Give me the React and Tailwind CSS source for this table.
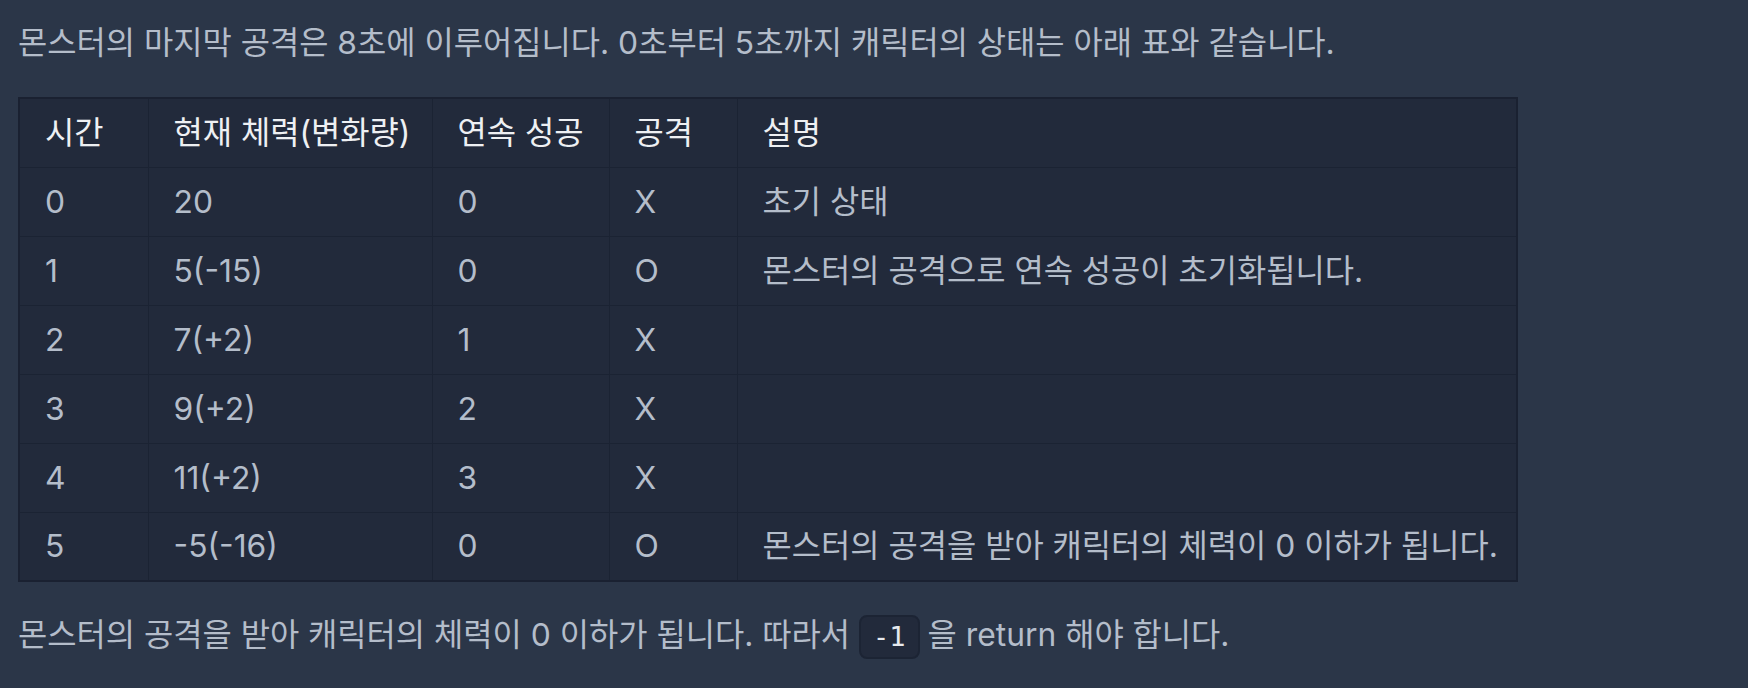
import React from 'react';

const rows = [
    ['0', '20', '0', 'X', '초기 상태'],
    ['1', '5(-15)', '0', 'O', '몬스터의 공격으로 연속 성공이 초기화됩니다.'],
    ['2', '7(+2)', '1', 'X', ''],
    ['3', '9(+2)', '2', 'X', ''],
    ['4', '11(+2)', '3', 'X', ''],
    ['5', '-5(-16)', '0', 'O', '몬스터의 공격을 받아 캐릭터의 체력이 0 이하가 됩니다.'],
];

const headers = ['시간', '현재 체력(변화량)', '연속 성공', '공격', '설명'];
const widths = ['w-[129px]', 'w-[284px]', 'w-[177px]', 'w-[128px]', 'w-[780px]'];

const App = () => {
    return (
        <div className="min-h-screen w-full bg-[#2b3648] px-[18px] pt-[20px] pb-8 text-[31.8px] leading-[46px] text-[#b4bdca] [font-family:Inter,'Noto_Sans_CJK_KR',sans-serif]">
            <p>몬스터의 마지막 공격은 8초에 이루어집니다. 0초부터 5초까지 캐릭터의 상태는 아래 표와 같습니다.</p>

            <table className="mt-[31px] w-[1498px] table-fixed border-collapse border-2 border-[#1a2131]">
                <colgroup>
                    {widths.map((w, i) => <col key={i} className={w} />)}
                </colgroup>
                <thead>
                    <tr className="h-[69px] bg-[#222a3b]">
                        {headers.map((h) => (
                            <th key={h} className="border border-[#1b2333] pl-[25px] pr-0 text-left font-normal whitespace-nowrap text-[#eef0f3]">{h}</th>
                        ))}
                    </tr>
                </thead>
                <tbody>
                    {rows.map((r) => (
                        <tr key={r[0]} className="h-[69px] bg-[#222a3b]">
                            {r.map((c, i) => (
                                <td key={i} className="border border-[#1b2333] pl-[25px] pr-0 whitespace-nowrap">{c}</td>
                            ))}
                        </tr>
                    ))}
                </tbody>
            </table>

            <p className="mt-[30px]">
                몬스터의 공격을 받아 캐릭터의 체력이 0 이하가 됩니다. 따라서{' '}
                <code className="mr-[8px] inline-block h-[44px] rounded-lg border-2 border-[#1c2434] bg-[#222a3b] px-[12px] align-middle text-[27px] leading-[40px] text-[#e6e9ee] [font-family:'DejaVu_Sans_Mono',monospace]">-1</code>
                을 return 해야 합니다.
            </p>
        </div>
    );
};

export default App;
